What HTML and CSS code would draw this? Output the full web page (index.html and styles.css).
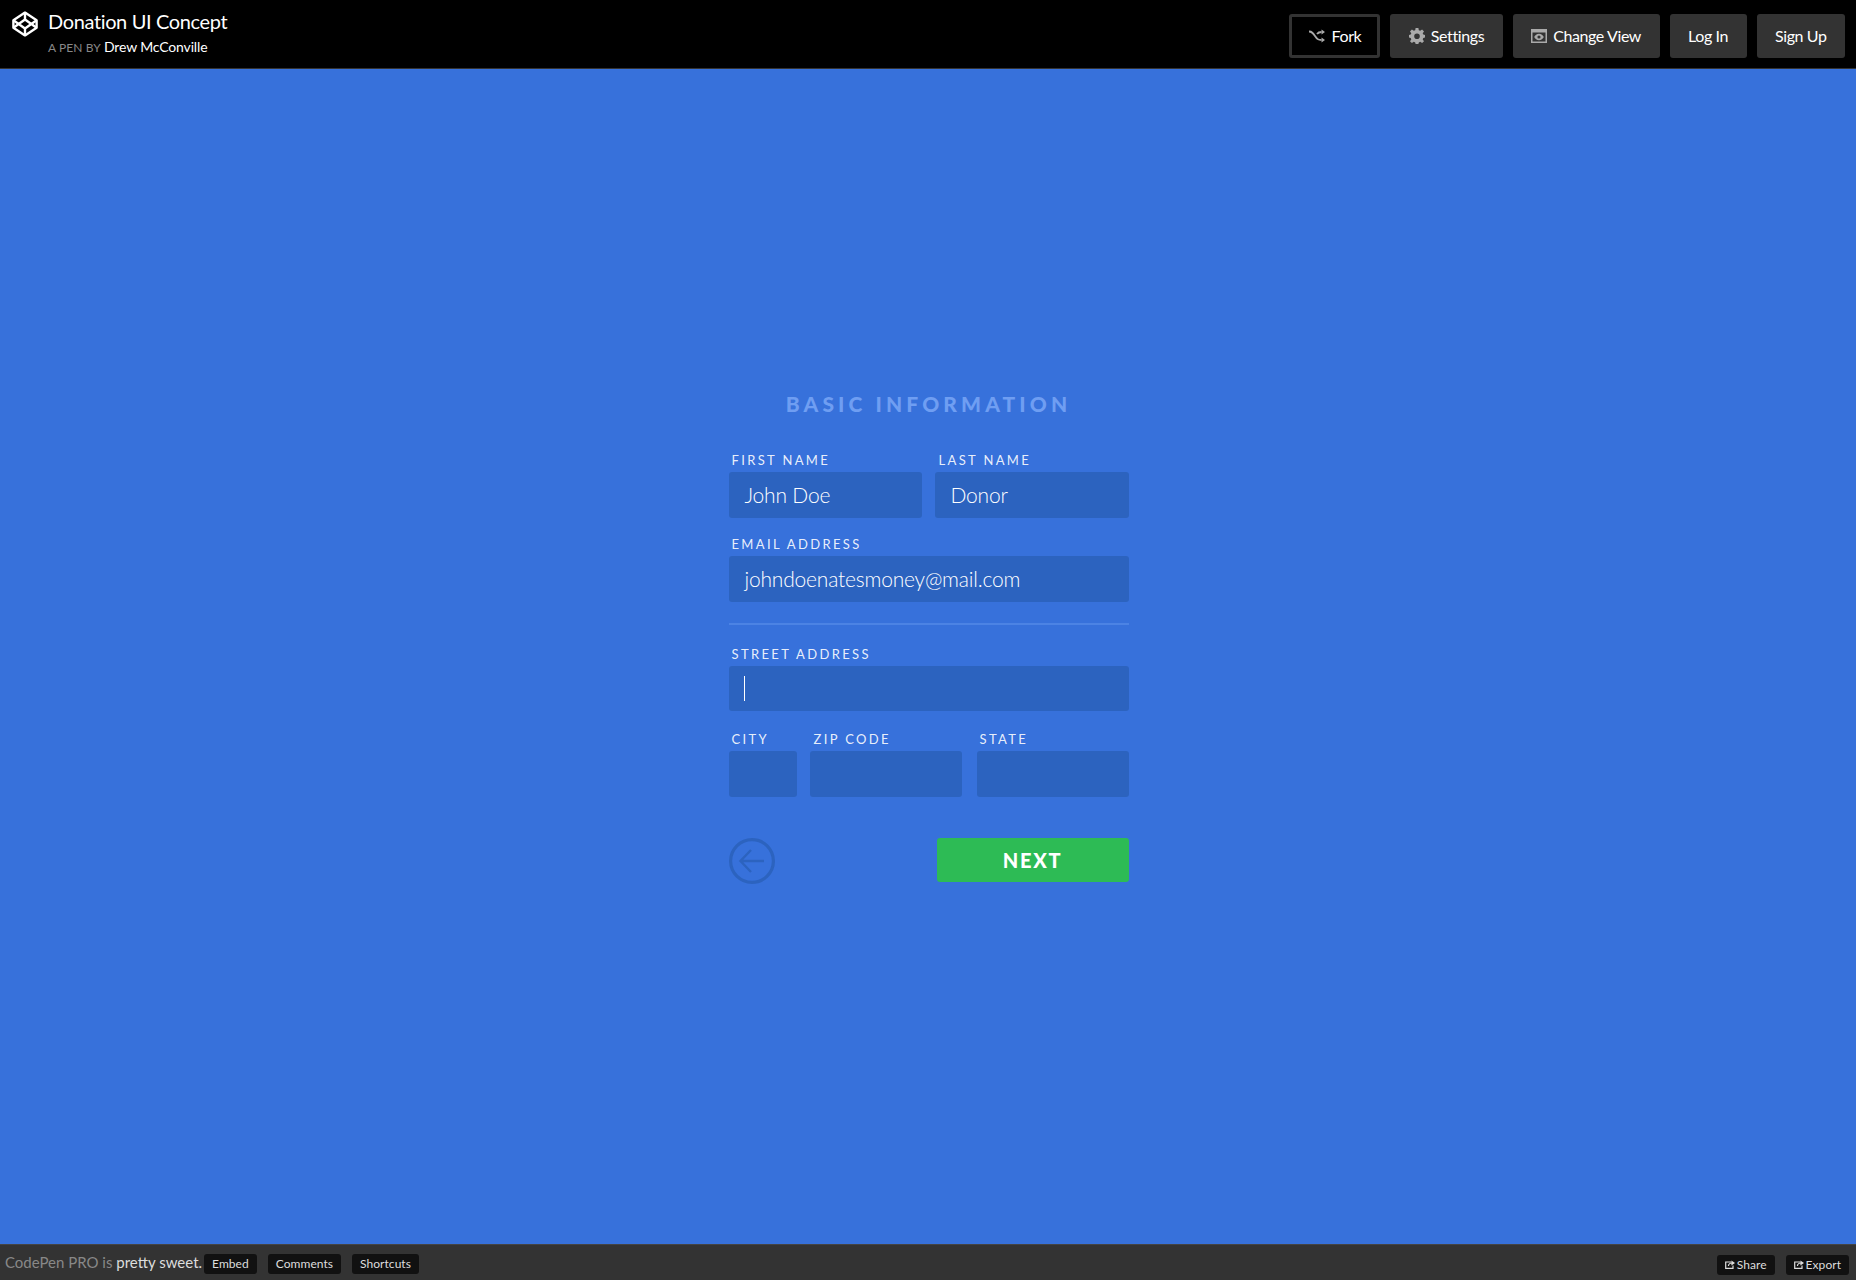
FILE: index.html
```html
<!DOCTYPE html>
<html lang="en">
<head>
<meta charset="utf-8">
<title>Donation UI Concept</title>
<link rel="stylesheet" href="styles.css">
</head>
<body>
<header class="topbar">
  <div class="pen-info">
    <svg class="logo" viewBox="0 0 26 26" width="26" height="26" fill="none" stroke="#fff" stroke-width="2.4" stroke-linejoin="round">
      <path d="M13 1.6 24.6 9.2V16.8L13 24.4 1.4 16.8V9.2Z"/>
      <path d="M13 1.6V8.6M13 17.4V24.4M1.4 9.2 13 17.4 24.6 9.2M1.4 16.8 13 8.6 24.6 16.8"/>
    </svg>
    <div class="pen-text">
      <h1 class="pen-title">Donation UI Concept</h1>
      <p class="pen-by"><span class="by-label">A PEN BY</span> <a class="author">Drew McConville</a></p>
    </div>
  </div>
  <nav class="actions">
    <a class="btn btn-outline">
      <svg class="btn-icon" viewBox="0 0 16 14" width="16" height="14" fill="none" stroke="#aaa" stroke-width="1.8"><path d="M0 2.5C3 2.5 4 4 6 7S9 11 12.5 11"/><path d="M8 5C9 3.6 10.5 3 12.5 3"/><path fill="#aaa" stroke="none" d="M12.5 0.4 16 3 12.5 5.6ZM12.5 8.4 16 11 12.5 13.6Z"/></svg>
      Fork
    </a>
    <a class="btn">
      <svg class="btn-icon" viewBox="0 0 16 16" width="16" height="16"><path fill="#aaa" fill-rule="evenodd" d="M6.6 0H9.4L9.8 2.2 11.2 2.8 13.1 1.5 15 3.4 13.7 5.2 14.3 6.6 16 7V9.6L14.3 10 13.7 11.4 15 13.2 13.1 15.1 11.2 13.8 9.8 14.4 9.4 16H6.6L6.2 14.4 4.8 13.8 2.9 15.1 1 13.2 2.3 11.4 1.7 10 0 9.6V7L1.7 6.6 2.3 5.2 1 3.4 2.9 1.5 4.8 2.8 6.2 2.2ZM8 5.4A2.8 2.8 0 1 0 8 11 2.8 2.8 0 1 0 8 5.4Z"/></svg>
      Settings
    </a>
    <a class="btn">
      <svg class="btn-icon" viewBox="0 0 16 14" width="16" height="14"><path fill="#aaa" fill-rule="evenodd" d="M0 0H16V14H0ZM1.5 3.5V12.5H14.5V3.5ZM8 4.8C10.2 4.8 11.9 6.4 12.8 8 11.9 9.6 10.2 11.2 8 11.2 5.8 11.2 4.1 9.6 3.2 8 4.1 6.4 5.8 4.8 8 4.8ZM8 6.4A1.6 1.6 0 1 0 8 9.6 1.6 1.6 0 1 0 8 6.4Z"/></svg>
      Change View
    </a>
    <a class="btn">Log In</a>
    <a class="btn">Sign Up</a>
  </nav>
</header>

<main class="stage">
  <form class="donate-form">
    <h2 class="form-title">BASIC INFORMATION</h2>
    <div class="row row-name">
      <label class="field field-first"><span class="field-label">FIRST NAME</span><span class="field-box">John Doe</span></label>
      <label class="field field-last"><span class="field-label">LAST NAME</span><span class="field-box">Donor</span></label>
    </div>
    <div class="row row-email">
      <label class="field field-full"><span class="field-label">EMAIL ADDRESS</span><span class="field-box">johndoenatesmoney@mail.com</span></label>
    </div>
    <hr class="divider">
    <div class="row">
      <label class="field field-full"><span class="field-label">STREET ADDRESS</span><span class="field-box field-box-street"><span class="caret"></span></span></label>
    </div>
    <div class="row row-city">
      <label class="field field-city"><span class="field-label">CITY</span><span class="field-box"></span></label>
      <label class="field field-zip"><span class="field-label">ZIP CODE</span><span class="field-box"></span></label>
      <label class="field field-state"><span class="field-label">STATE</span><span class="field-box"></span></label>
    </div>
    <div class="form-nav">
      <button class="back" type="button" aria-label="Back">
        <svg viewBox="0 0 46 46" width="46" height="46" fill="none" stroke="#2c63bf"><circle cx="23" cy="23" r="21.4" stroke-width="3.2"/><path stroke-width="2.4" d="M35 23H12M22 12 11.5 23 22 34"/></svg>
      </button>
      <button class="next" type="button">NEXT</button>
    </div>
  </form>
</main>

<footer class="bottombar">
  <div class="foot-left">
    <span class="promo">CodePen PRO is <strong class="promo-strong">pretty sweet.</strong></span>
    <a class="chip chip-embed">Embed</a>
    <a class="chip">Comments</a>
    <a class="chip">Shortcuts</a>
  </div>
  <div class="foot-right">
    <a class="chip chip-ext"><svg class="chip-icon" viewBox="0 0 10 9" width="10" height="9" fill="none" stroke="#ddd" stroke-width="1.2"><path d="M6 2H.7V8.3H8V5.5"/><path d="M3.4 6C3.6 4 5 3 7 3"/><path fill="#ddd" stroke="none" d="M6.4.6 10 3 6.4 5.4Z"/></svg>Share</a>
    <a class="chip chip-ext"><svg class="chip-icon" viewBox="0 0 10 9" width="10" height="9" fill="none" stroke="#ddd" stroke-width="1.2"><path d="M6 2H.7V8.3H8V5.5"/><path d="M3.4 6C3.6 4 5 3 7 3"/><path fill="#ddd" stroke="none" d="M6.4.6 10 3 6.4 5.4Z"/></svg>Export</a>
  </div>
</footer>
</body>
</html>
```

FILE: styles.css
```css
* { box-sizing: border-box; }
html, body { height: 100%; }
body {
  margin: 0;
  height: 1280px;
  display: flex;
  flex-direction: column;
  background: #3771db;
  font-family: Lato, "Open Sans", sans-serif;
  color: #fff;
  overflow: hidden;
}

/* top bar */
.topbar {
  height: 69px;
  flex: none;
  display: flex;
  justify-content: space-between;
  background: #000;
  border-bottom: 1px solid #333;
  padding: 14px 11px 0 12px;
}
.pen-info { display: flex; align-items: flex-start; gap: 10px; }
.logo { margin-top: -3px; }
.pen-title { margin: -5px 0 0; font-size: 20px; font-weight: 400; line-height: 24px; letter-spacing: -0.37px; }
.pen-by { margin: 6px 0 0; font-size: 12px; line-height: 16px; }
.by-label { color: #888; letter-spacing: 0.1px; }
.author { color: #fff; font-size: 14px; letter-spacing: -0.15px; }
.actions { display: flex; gap: 10px; }
.btn {
  height: 44px;
  display: flex;
  align-items: center;
  gap: 6px;
  padding: 0 18.5px 1px;
  border-radius: 3px;
  background: #333;
  font-size: 16px;
  letter-spacing: -0.4px;
}
.btn-outline { background: #000; border: 3px solid #333; gap: 7px; padding: 0 16px 1px 17px; }
.btn-icon { flex: none; }

/* stage */
.stage { flex: 1; min-height: 0; padding-top: 322px; display: flex; justify-content: center; }
.donate-form { width: 400px; margin-left: 1px; }
.form-title {
  margin: 0 0 35px;
  text-align: center;
  font-size: 21px;
  line-height: 26px;
  font-weight: 900;
  letter-spacing: 4.1px;
  color: #6f9ef2;
}
.row { display: flex; }
.row-name { gap: 13px; }
.row-email { margin-top: 18px; }
.row-city { margin-top: 20px; }
.field { display: block; }
.field-first { width: 193px; }
.field-last { width: 194px; }
.field-full { width: 400px; }
.field-city { width: 68px; margin-right: 13px; }
.field-zip { width: 152px; margin-right: 15px; }
.field-state { width: 152px; }
.field-label {
  display: block;
  height: 20px;
  padding-left: 3px;
  font-size: 13px;
  font-weight: 400;
  line-height: 17px;
  letter-spacing: 2.35px;
  white-space: nowrap;
  color: rgba(255, 255, 255, 0.9);
}
.field-last .field-label, .field-zip .field-label { padding-left: 4px; }
.field-box {
  display: flex;
  align-items: center;
  height: 46px;
  padding: 0 0 2px 16px;
  border-radius: 3px;
  background: #2c63bf;
  font-size: 21px;
  font-weight: 300;
  letter-spacing: -0.2px;
}
.field-box-street { height: 45px; padding: 0 0 0 15px; }
.caret { width: 1px; height: 25px; background: #fff; }
.divider { height: 2px; margin: 21px 0 21px; border: 0; background: #4c83e4; }
.form-nav { display: flex; justify-content: space-between; align-items: flex-start; margin-top: 41px; }
.back { width: 46px; height: 46px; padding: 0; border: 0; background: none; }
.back svg { display: block; }
.next {
  width: 192px;
  height: 44px;
  border: 0;
  border-radius: 3px;
  background: #2dbb55;
  color: #fff;
  font-family: Lato, sans-serif;
  font-size: 20px;
  font-weight: 900;
  letter-spacing: 1.7px;
}

/* bottom bar */
.bottombar {
  height: 36px;
  flex: none;
  display: flex;
  justify-content: space-between;
  background: #333;
  border-top: 1px solid #444;
  padding: 9px 7px 0 5px;
}
.foot-left, .foot-right { display: flex; align-items: flex-start; }
.foot-right { margin-top: 1px; }
.promo { color: #888; font-size: 15px; line-height: 20px; margin-right: 2px; margin-top: -2px; }
.promo-strong { color: #ddd; font-weight: 400; }
.chip {
  height: 20px;
  display: flex;
  align-items: center;
  margin-right: 11px;
  padding: 0 8px 1px;
  border-radius: 3px;
  background: #111;
  color: #ddd;
  font-size: 12px;
  letter-spacing: 0.05px;
}
.foot-right .chip:last-child { margin-right: 0; }
.chip-icon { margin-right: 2px; }
```
